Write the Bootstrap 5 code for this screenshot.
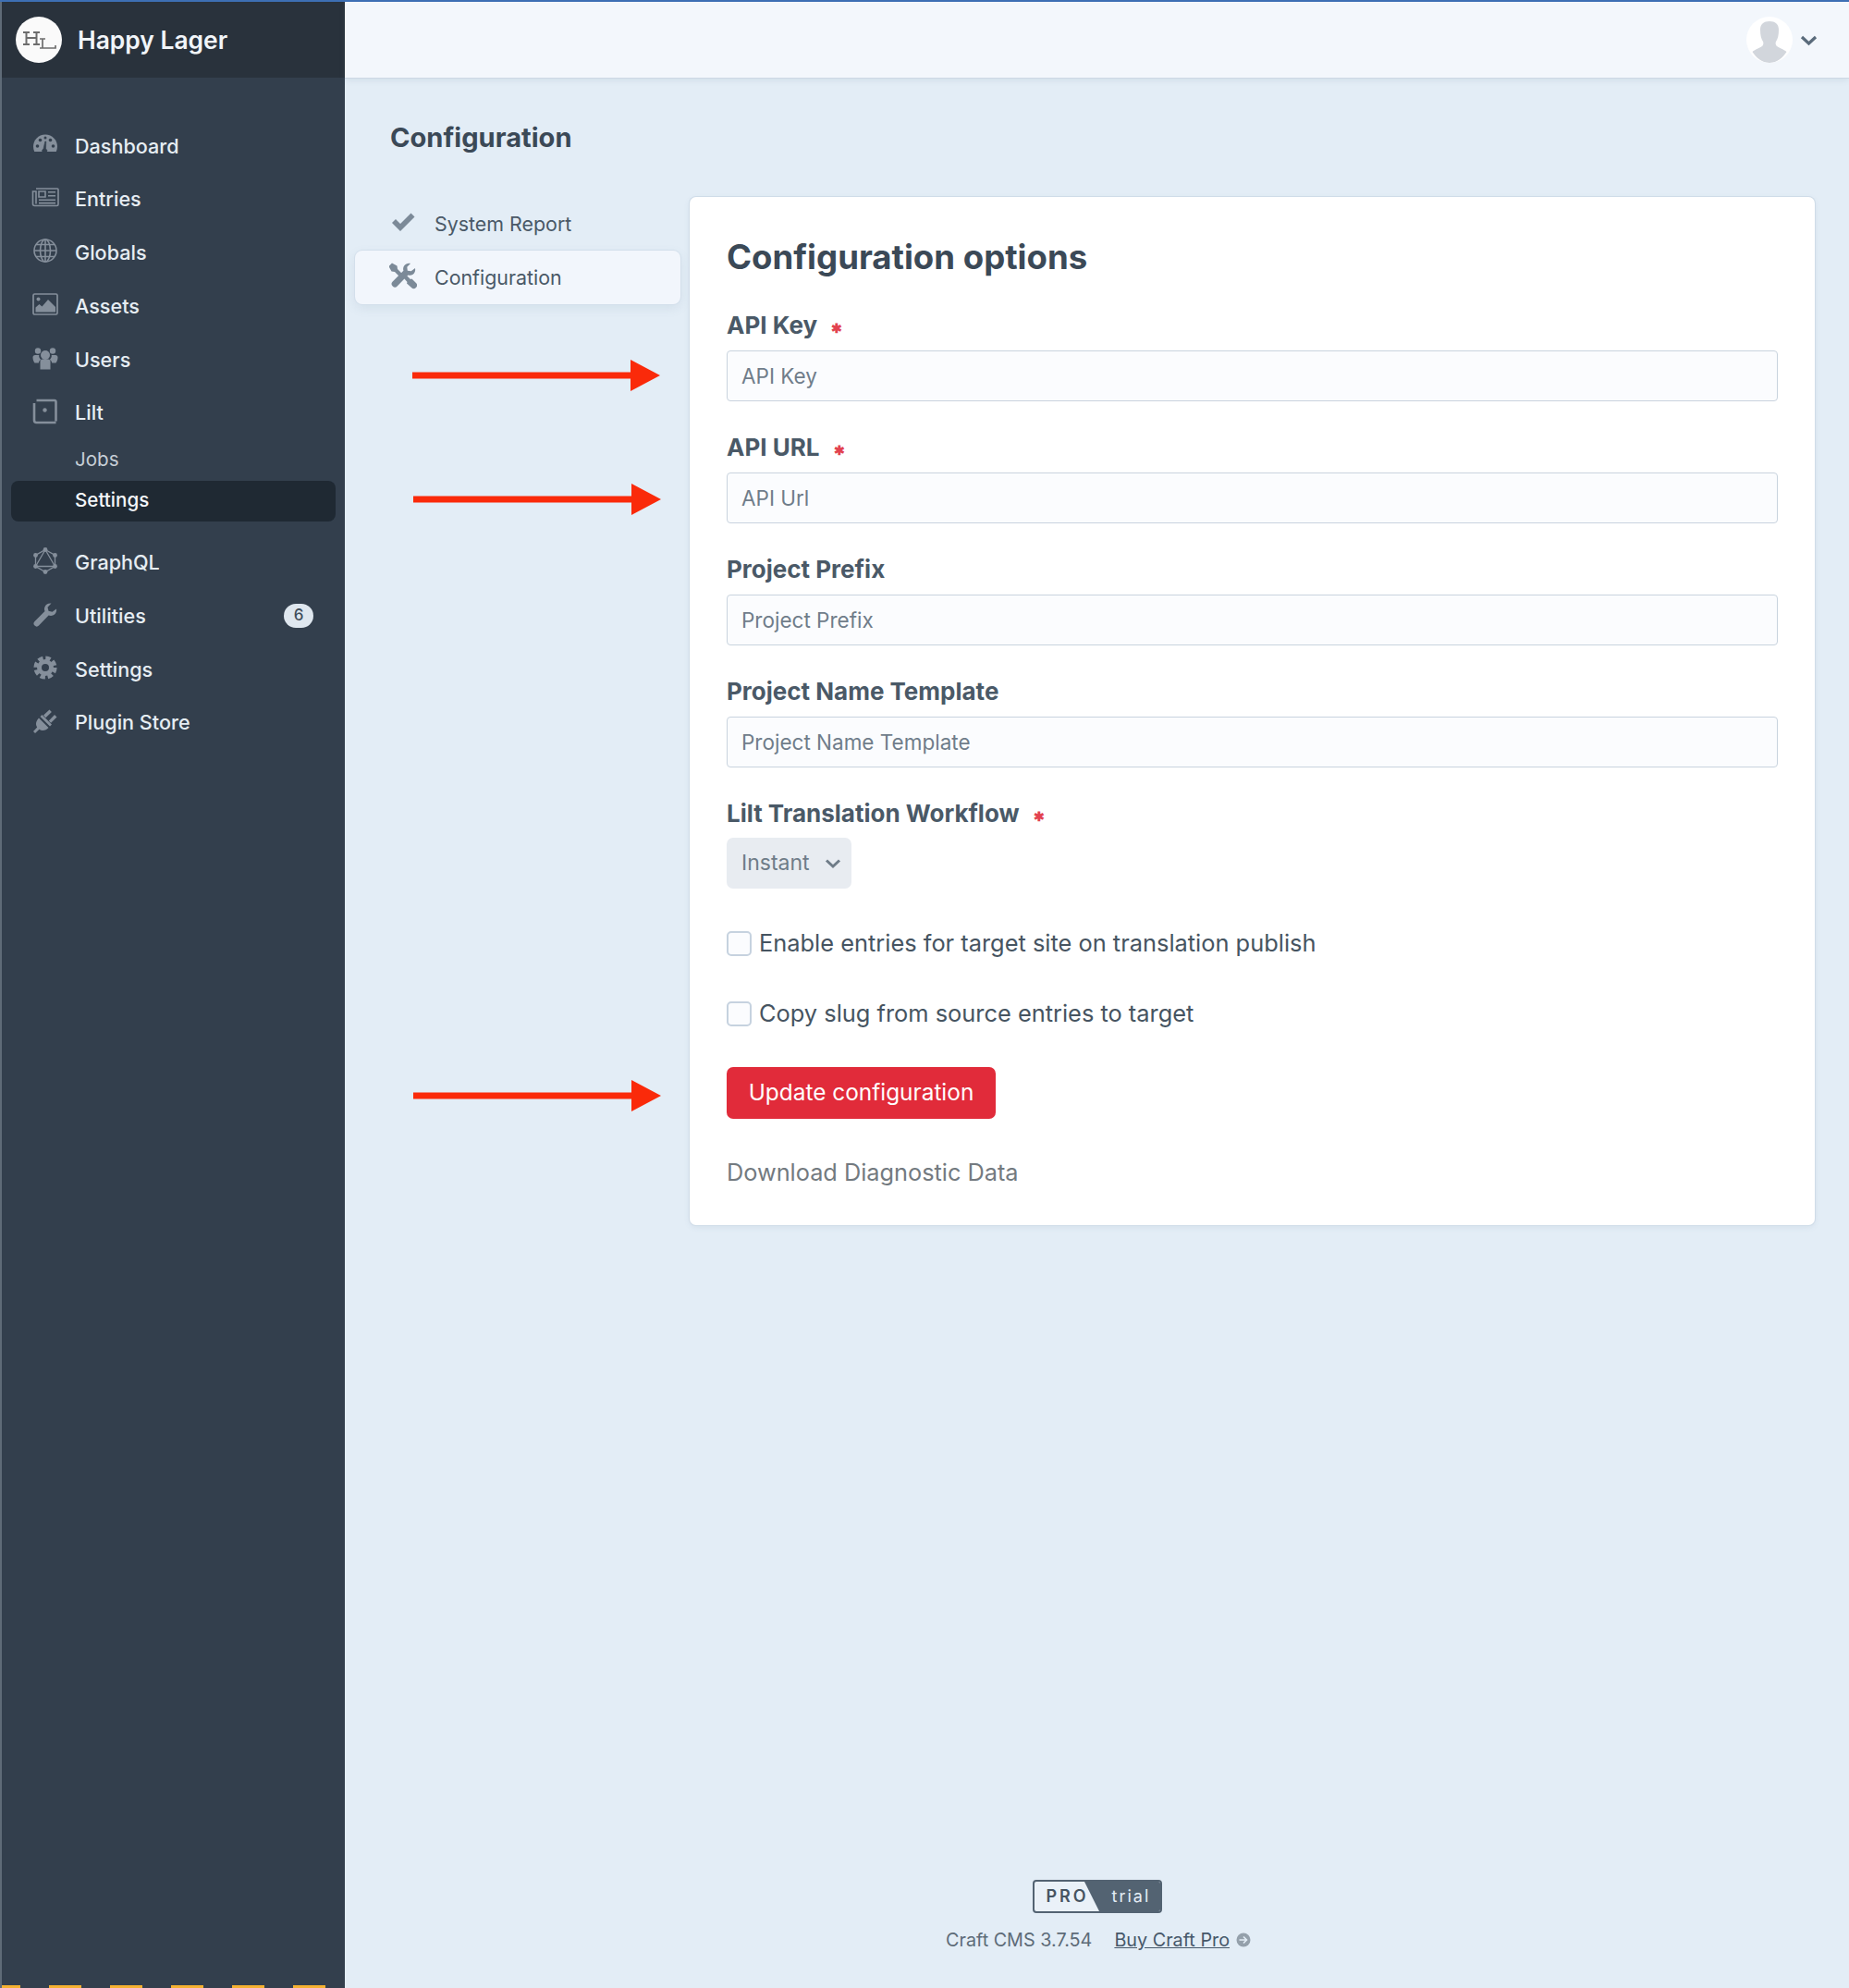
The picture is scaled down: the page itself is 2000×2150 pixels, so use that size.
<!DOCTYPE html>
<html lang="en">
<head>
<meta charset="utf-8">
<title>Configuration</title>
<link href="https://cdn.jsdelivr.net/npm/bootstrap@5.3.0/dist/css/bootstrap.min.css" rel="stylesheet">
<style>
html,body{height:100%}
body{font-family:Inter,"Liberation Sans",sans-serif;background:#e3edf6;color:#3f4d5a;border-top:2px solid #3d6fb4;min-height:2150px;position:relative}
.shell{min-height:2148px}
.side{width:373px;flex:none;background:#333f4d;border-left:2px solid #5f6b77}
.brandbar{height:82px;background:#29323c;padding-left:15px;gap:17px}
.brandlogo{width:50px;height:50px;border-radius:50%;background:#fafafa;flex:none}
.brandname{color:#f1f5f9;font-size:26.4px;font-weight:600;line-height:1}
.menu{margin-top:45px;list-style:none;padding:0}
.menu-row{height:57.75px;padding-left:32px;color:#e6edf3;font-size:21.6px;font-weight:450;text-decoration:none}
.menu-ico{width:30px;height:30px;flex:none;margin-right:17px;color:#858f9b;transform:translateY(-2px)}
.sub-row{height:44px;margin:0 10px;padding-left:69px;font-size:20.6px;color:#c6ced6;border-radius:8px;text-decoration:none}
.sub-row.on{background:#1f2933;color:#f4f7fa;font-weight:500}
.sub-gap{height:16px}
.count{margin-left:auto;margin-right:34px;background:#dfe7ef;color:#3f4d5a;font-size:17px;width:32px;height:26px;border-radius:13px}
.topstrip{height:82px;background:#f3f7fc;box-shadow:0 1px 0 #cdd8e4,0 3px 6px rgba(90,120,150,.12);padding-right:34px}
.avatar{width:50px;height:50px;border-radius:50%;overflow:hidden}
.pagetitle{font-size:29.1px;font-weight:700;color:#3b4957;margin:46px 0 0 49px;line-height:38px}
.work{padding:45px 37px 0 11px}
.subnav{width:352px;flex:none;margin-right:10px}
.subrow{height:58px;padding-left:37px;font-size:21.4px;color:#4a5967;border-radius:8px;text-decoration:none}
.subrow.on{background:#f2f6fc;box-shadow:0 0 0 1px #d3dfeb,0 4px 12px rgba(90,120,150,.12)}
.subico{width:30px;height:30px;flex:none;margin-right:19px;transform:translateY(-2px);color:#7c8a98}
.panel{flex:1;background:#fff;border-radius:7px;box-shadow:0 0 0 1px #cfdce8,0 2px 6px rgba(90,120,150,.12);padding:42px 40px 36px;height:1112px}
.panel-h{font-size:36.6px;font-weight:650;line-height:46px;color:#3b4957;margin:0 0 35px}
.fld{margin-bottom:34px}
.fld-l{font-size:26px;font-weight:650;color:#4a5967;height:32px;line-height:32px;margin-bottom:11px;display:block}
.star{color:#e2424f;font-size:14px;line-height:1;margin-left:9px;vertical-align:1px;display:inline-block}
.fld-i{height:55px;border-radius:4px;border:1px solid #c9d3de;background:#fbfcfe;font-size:22.5px;padding:0 15px;color:#3f4d5a;box-shadow:none}
.fld-i::placeholder{color:#707d8a;opacity:1}
.pick{width:135px;height:55px;border-radius:7px;background:#e8ecf1;color:#6f7c88;font-size:23px;padding-left:16px;gap:16px;margin-top:-1px}
.chk-row{font-size:25.4px;color:#465461;height:36px;gap:8px;margin-bottom:40px}
.chk-top{margin-top:41px}
.chk-box{width:27px;height:27px;border-radius:5px;border:2px solid #c6d2df;background:#fbfcfe;flex:none}
.go{background:#e12b3a;color:#fff;font-size:24.4px;border-radius:7px;width:291px;height:56px;border:0;padding:0 0 2px}
.go:hover{background:#e12b3a;color:#fff}
.dl{font-size:25.3px;color:#737a80;text-decoration:none;display:block;margin-top:42px;line-height:32px}
.foot{margin-top:auto;padding-bottom:39px}
.tag{width:140px;height:36px;border:2px solid #536372;border-radius:4px;overflow:hidden;position:relative;font-size:18px;letter-spacing:3px;color:#465461;font-weight:600;background:#eaf1f8}
.tag svg{position:absolute;inset:0;width:100%;height:100%}
.tag-a,.tag-b{position:absolute;top:0;line-height:32px}
.tag-a{left:13px}
.tag-b{left:84px;color:#e3edf6;font-weight:400;letter-spacing:2px}
.foot-t{font-size:19.8px;color:#5d6b78;margin-top:16px;line-height:26px;gap:24px;padding-left:3px}
.foot-t a{color:#46586a}
.foot-l{gap:7px}
.mark-arrow{position:absolute;width:270px;height:34px;left:446px}
.a1{top:387px}.a2{top:521px;left:447px}.a3{top:1166px;left:447px}
.stripes{height:3px;margin-top:auto;background:repeating-linear-gradient(90deg,#f5b131 0 20px,transparent 20px 51px,#f5b131 51px 66px)}
</style>
</head>
<body>
<div class="shell d-flex">
  <aside class="side d-flex flex-column">
    <div class="brandbar d-flex align-items-center">
      <div class="brandlogo">
        <svg width="50" height="50" viewBox="0 0 50 50" fill="none" stroke="#6d6d6d"><path d="M8 17h7M19 17h7M11.500 17v13M22.500 17v13M8 30h7M19 30h7M11.500 23h11" stroke-width="2"/><path d="M26 24h6M29 24v10M26 34h17v-3" stroke-width="1.700"/></svg>
      </div>
      <span class="brandname">Happy Lager</span>
    </div>
    <nav class="menu">
      <a class="menu-row d-flex align-items-center" href="#"><svg class="menu-ico" viewBox="0 0 30 30" fill="currentColor"><path d="M15 4.500C7.500 4.500 2 10.500 2 17.500c0 2 .4 3.700 1.200 5.500h23.600c.8-1.800 1.200-3.500 1.200-5.500C28 10.500 22.500 4.500 15 4.500z"/><g fill="#333f4d"><circle cx="6.500" cy="17" r="1.800"/><circle cx="9.500" cy="10.500" r="1.800"/><circle cx="23.500" cy="17" r="1.800"/><circle cx="20.500" cy="10.500" r="1.800"/><circle cx="15" cy="8" r="1.500"/><path d="M13 20l1.800-8h1l-.3 8a2.500 2.500 0 1 1-2.500 0z" stroke="#333f4d" stroke-width=".6"/></g></svg>Dashboard</a>
      <a class="menu-row d-flex align-items-center" href="#"><svg class="menu-ico" viewBox="0 0 30 30" fill="currentColor"><path fill="none" stroke="currentColor" stroke-width="1.600" d="M5 5h23a1 1 0 0 1 1 1v16a1.500 1.500 0 0 1-1.500 1.500h-24A2 2 0 0 1 1.500 21.500V8H5v13.500"/><path fill="none" stroke="currentColor" stroke-width="1.600" d="M8 8h7v6H8z"/><path d="M18 8h8v1.600h-8zM18 12h8v1.600h-8zM8 16.500h18v1.600H8zM8 19.800h18v1.600H8z"/></svg>Entries</a>
      <a class="menu-row d-flex align-items-center" href="#"><svg class="menu-ico" viewBox="0 0 30 30" fill="none"><g stroke="currentColor" stroke-width="1.600"><circle cx="15" cy="15" r="12"/><ellipse cx="15" cy="15" rx="5.500" ry="12"/><path d="M3 15h24M5 8.500h20M5 21.500h20M15 3v24"/></g></svg>Globals</a>
      <a class="menu-row d-flex align-items-center" href="#"><svg class="menu-ico" viewBox="0 0 30 30" fill="currentColor"><rect x="2" y="4" width="26" height="22" rx="1.500" fill="none" stroke="currentColor" stroke-width="1.700"/><circle cx="7.500" cy="9.500" r="2"/><path d="M4.500 23.500v-5l4-3.500 3 2.500 6.500-7.500 8 8v5.500z"/></svg>Assets</a>
      <a class="menu-row d-flex align-items-center" href="#"><svg class="menu-ico" viewBox="0 0 30 30" fill="currentColor"><circle cx="15" cy="12" r="5"/><circle cx="7" cy="7.500" r="3.200"/><circle cx="23" cy="7.500" r="3.200"/><path d="M9.500 19c0-1.500 1.200-2.500 2.500-2.500h6c1.300 0 2.500 1 2.500 2.500v8.500h-11z"/><path d="M1.500 14.500c0-1.500 1-2.500 2.500-2.500h4.300c-.5 1.500.3 3.800 2.200 5-1.400.6-2.500 1.700-2.700 3.500H3.500c-1.200-1.300-2-3.800-2-6zM28.500 14.500c0-1.500-1-2.500-2.500-2.500h-4.300c.5 1.500-.3 3.800-2.200 5 1.400.6 2.500 1.700 2.700 3.500h4.300c1.200-1.300 2-3.800 2-6z"/></svg>Users</a>
      <a class="menu-row d-flex align-items-center" href="#"><svg class="menu-ico" viewBox="0 0 30 30" fill="none"><path d="M5.500 3H25a1.500 1.500 0 0 1 1.500 1.500v21M3 6v18.500a2.500 2.500 0 0 0 2.500 2.500h21" stroke="currentColor" stroke-width="2.600"/><circle cx="14.500" cy="13.500" r="2.200" fill="currentColor"/></svg>Lilt</a>
      <a class="sub-row d-flex align-items-center" href="#">Jobs</a>
      <a class="sub-row on d-flex align-items-center" href="#">Settings</a>
      <div class="sub-gap"></div>
      <a class="menu-row d-flex align-items-center" href="#"><svg class="menu-ico" viewBox="0 0 30 30" fill="none"><g stroke="currentColor" stroke-width="1.300"><path d="M15 3.500l10.500 6v12L15 27.500l-10.500-6v-12z"/><path d="M15 3.500l10.500 18h-21z"/></g><g fill="currentColor"><circle cx="15" cy="3.500" r="2.400"/><circle cx="25.500" cy="9.500" r="2.400"/><circle cx="25.500" cy="21.500" r="2.400"/><circle cx="15" cy="27.500" r="2.400"/><circle cx="4.500" cy="21.500" r="2.400"/><circle cx="4.500" cy="9.500" r="2.400"/></g></svg>GraphQL</a>
      <a class="menu-row d-flex align-items-center" href="#"><svg class="menu-ico" viewBox="0 0 30 30" fill="currentColor"><path d="M27 9.500c.6 3-1 6-3.800 7-1.600.6-3.200.5-4.600-.1L8 27.500a3 3 0 0 1-4.500-4.500l11-11c-.6-1.400-.7-3-.1-4.600C15.400 4.600 18.500 3 21.500 3.500l-4 4.200 1 4 4 1z"/></svg><span>Utilities</span><span class="count d-flex align-items-center justify-content-center">6</span></a>
      <a class="menu-row d-flex align-items-center" href="#"><svg class="menu-ico" viewBox="0 0 30 30" fill="none"><circle cx="15" cy="15" r="6.500" stroke="currentColor" stroke-width="5"/><circle cx="15" cy="15" r="10.300" stroke="currentColor" stroke-width="4.600" stroke-dasharray="5.300 2.790"/></svg>Settings</a>
      <a class="menu-row d-flex align-items-center" href="#"><svg class="menu-ico" viewBox="0 0 30 30" fill="currentColor"><path d="M8 11.500l10.500 10.500c-2.500 3-7 4-10 1.800L4 28l-2-2 4.200-4.500C4 18.500 5 14.500 8 11.500z"/><path d="M9.500 10l2-2 10.500 10.500-2 2zM13 8.500L19.500 2.500l2.400 2.400-6.500 6.300zM18.800 14.500l6.200-6.500 2.500 2.400-6.400 6.400z"/></svg>Plugin Store</a>
    </nav>
    <div class="stripes"></div>
  </aside>
  <main class="flex-grow-1 d-flex flex-column">
    <header class="topstrip d-flex align-items-center justify-content-end">
      <div class="avatar bg-white">
        <svg width="50" height="50" viewBox="0 0 50 50"><path fill="#d2d6dc" d="M15 14c0-6 4-9 10-9s10 3 10 9c0 6-1 10-3 13-.6 1-.6 3 .5 4.500 2 2 8 4 11 6.500-4 6-10 12-18.500 12S10.500 44 6.500 38c3-2.500 9-4.500 11-6.500 1.100-1.500 1.100-3.500.5-4.500-2-3-3-7-3-13z"/></svg>
      </div>
      <svg class="ms-2" width="19" height="13" viewBox="0 0 19 13" fill="none"><path d="M2 3l7.500 7L17 3" stroke="#5a6b7b" stroke-width="3.200"/></svg>
    </header>
    <h1 class="pagetitle">Configuration</h1>
    <div class="work d-flex align-items-start">
      <div class="subnav">
        <a class="subrow d-flex align-items-center" href="#"><svg class="subico" viewBox="0 0 30 30" fill="currentColor"><path d="M3 16l4-4 5 5L23.500 5.500l4 4L12 25z"/></svg>System Report</a>
        <a class="subrow on d-flex align-items-center" href="#"><svg class="subico" viewBox="0 0 30 30" fill="currentColor"><path d="M3 1.500l5.500 3 .5 3.500 5 5-3 3-5-5-3.500-.5-3-5.500z"/><path d="M15.500 17.500l3-3 4.500 4.500 1.500-.5 4.500 4.500a3.500 3.500 0 0 1-5 5L19 23.500l.5-1.500z"/><path d="M28 7c.6 2.700-.3 5.200-2.300 6.700-1.700 1.200-3.700 1.400-5.400.8L8.700 26.500a3.500 3.500 0 0 1-5-5L15.400 9.700c-.6-1.800-.3-3.800.9-5.400C17.800 2.300 20.300 1.400 23 2l-3.700 3.800.5 3.900 3.900.5z"/></svg>Configuration</a>
      </div>
      <section class="panel">
        <h2 class="panel-h">Configuration options</h2>
        <div class="fld"><label class="fld-l">API Key <span class="star">✱</span></label><input class="form-control fld-i" placeholder="API Key"></div>
        <div class="fld"><label class="fld-l">API URL <span class="star">✱</span></label><input class="form-control fld-i" placeholder="API Url"></div>
        <div class="fld"><label class="fld-l">Project Prefix</label><input class="form-control fld-i" placeholder="Project Prefix"></div>
        <div class="fld"><label class="fld-l">Project Name Template</label><input class="form-control fld-i" placeholder="Project Name Template"></div>
        <div class="fld mb-0"><label class="fld-l">Lilt Translation Workflow <span class="star">✱</span></label>
          <div class="pick d-flex align-items-center"><span>Instant</span><svg width="18" height="12" viewBox="0 0 18 12" fill="none"><path d="M2 2.500l7 6.500 7-6.500" stroke="#6f7c88" stroke-width="3"/></svg></div>
        </div>
        <div class="chk-row chk-top d-flex align-items-center"><span class="chk-box"></span><span>Enable entries for target site on translation publish</span></div>
        <div class="chk-row d-flex align-items-center"><span class="chk-box"></span><span>Copy slug from source entries to target</span></div>
        <button class="btn go" type="button">Update configuration</button>
        <a class="dl" href="#">Download Diagnostic Data</a>
      </section>
    </div>
    <footer class="foot d-flex flex-column align-items-center">
      <div class="tag">
        <svg viewBox="0 0 136 32" preserveAspectRatio="none"><path fill="#536372" d="M54 0h82v32H70z"/></svg>
        <span class="tag-a">PRO</span><span class="tag-b">trial</span>
      </div>
      <div class="foot-t d-flex align-items-center">
        <span>Craft CMS 3.7.54</span>
        <span class="foot-l d-flex align-items-center"><a href="#">Buy Craft Pro</a>
          <svg width="16" height="16" viewBox="0 0 16 16"><circle cx="8" cy="8" r="7.500" fill="#94a0ab"/><path d="M3.500 8h7M8 4.500L11.500 8 8 11.500" fill="none" stroke="#e3edf6" stroke-width="1.600"/></svg></span>
      </div>
    </footer>
  </main>
</div>
<svg class="mark-arrow a1" viewBox="0 0 270 34"><path fill="#fa2a0a" d="M0 13.500h236V0l32 17-32 17V20.500H0z"/></svg>
<svg class="mark-arrow a2" viewBox="0 0 270 34"><path fill="#fa2a0a" d="M0 13.500h236V0l32 17-32 17V20.500H0z"/></svg>
<svg class="mark-arrow a3" viewBox="0 0 270 34"><path fill="#fa2a0a" d="M0 13.500h236V0l32 17-32 17V20.500H0z"/></svg>
<script src="https://cdn.jsdelivr.net/npm/bootstrap@5.3.0/dist/js/bootstrap.bundle.min.js"></script>
</body>
</html>
